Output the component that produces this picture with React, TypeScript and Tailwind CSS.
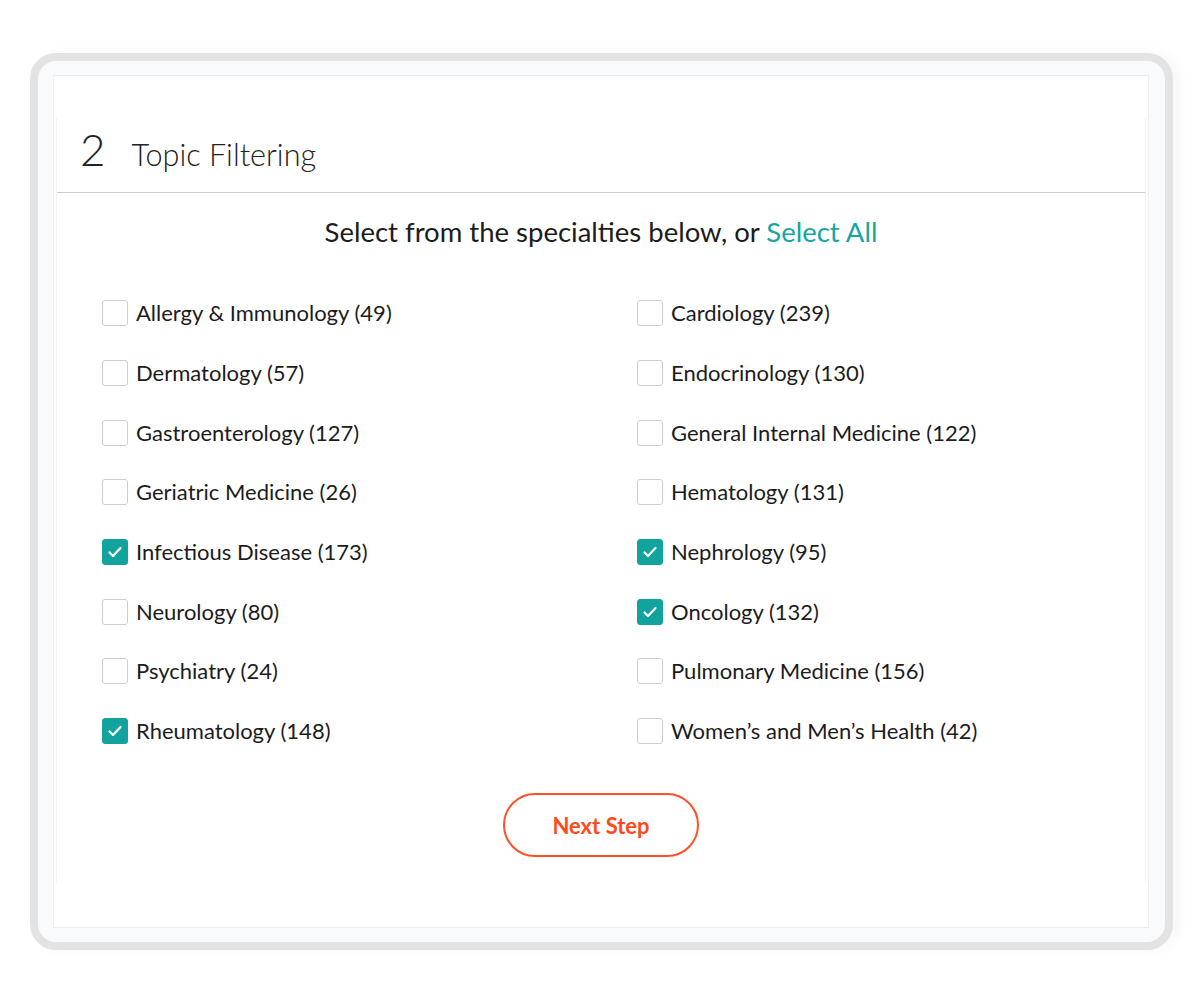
import { useState } from "react"

type Topic = { name: string; count: number }

const left: Topic[] = [
  { name: "Allergy & Immunology", count: 49 },
  { name: "Dermatology", count: 57 },
  { name: "Gastroenterology", count: 127 },
  { name: "Geriatric Medicine", count: 26 },
  { name: "Infectious Disease", count: 173 },
  { name: "Neurology", count: 80 },
  { name: "Psychiatry", count: 24 },
  { name: "Rheumatology", count: 148 },
]

const right: Topic[] = [
  { name: "Cardiology", count: 239 },
  { name: "Endocrinology", count: 130 },
  { name: "General Internal Medicine", count: 122 },
  { name: "Hematology", count: 131 },
  { name: "Nephrology", count: 95 },
  { name: "Oncology", count: 132 },
  { name: "Pulmonary Medicine", count: 156 },
  { name: "Women\u2019s and Men\u2019s Health", count: 42 },
]

// interleave so the grid fills row by row
const topics: Topic[] = left.flatMap((t, i) => [t, right[i]])

function Check({ on }: { on: boolean }) {
  return (
    <span
      className={[
        "flex h-[26px] w-[26px] shrink-0 items-center justify-center rounded-[3px] border",
        on ? "border-[#13a39e] bg-[#13a39e]" : "border-[#cfcfcf] bg-white",
      ].join(" ")}
    >
      {on && (
        <svg width="16" height="16" viewBox="0 0 16 16" fill="none">
          <path d="M2.5 8.5l3.5 3.5 7.5-8" stroke="white" strokeWidth="2.2" strokeLinecap="round" strokeLinejoin="round" />
        </svg>
      )}
    </span>
  )
}

export default function App() {
  const [selected, setSelected] = useState<Set<string>>(
    new Set(["Infectious Disease", "Nephrology", "Oncology", "Rheumatology"])
  )

  const toggle = (name: string) => {
    const next = new Set(selected)
    if (next.has(name)) next.delete(name)
    else next.add(name)
    setSelected(next)
  }

  return (
    <div className="h-[1006px] w-[1200px] bg-white pt-[53px] pl-[30px] font-[Lato,sans-serif] text-[#1c1c1c]">
      {/* device frame */}
      <div className="h-[897px] w-[1143px] rounded-[26px] border-[8px] border-[#e3e3e3] bg-[#f9fafb] pt-[14px] pb-[14px] pl-[15px] pr-[16px] shadow-[6px_0_14px_rgba(0,0,0,0.035)]">
        <div className="h-full border border-[#eceef2] bg-white pt-[42px]">
          <div className="mx-[2px] border-x border-[#f3f3f3] bg-white">
            {/* header */}
            <div className="flex items-baseline border-b border-[#cbcbcb] px-[23px] pt-[9px] pb-[21px] font-light leading-none">
              <span className="text-[44px] text-[#222]">2</span>
              <span className="ml-[26px] text-[30.6px] text-[#222]">Topic Filtering</span>
            </div>

            <p className="mt-[25px] text-center text-[27.5px] leading-none text-[#1c1c1c]">
              Select from the specialties below, or{" "}
              <button
                className="text-[#17a6a1]"
                onClick={() => setSelected(new Set(topics.map((t) => t.name)))}
              >
                Select All
              </button>
            </p>

            <div className="mt-[38px] grid grid-cols-[535px_1fr] px-[45px]">
              {topics.map((t) => (
                <label
                  key={t.name}
                  className="flex h-[59.7px] cursor-pointer items-center gap-[8px]"
                  onClick={() => toggle(t.name)}
                >
                  <Check on={selected.has(t.name)} />
                  <span className="text-[22px] leading-none text-[#1c1c1c]">
                    {t.name} ({t.count})
                  </span>
                </label>
              ))}
            </div>

            <div className="flex justify-center pt-[32px] pb-[26px]">
              <button className="h-[64px] w-[196px] rounded-full border-2 border-[#ff5026] text-[22px] font-bold text-[#ff4b1c]">
                Next Step
              </button>
            </div>
          </div>
        </div>
      </div>
    </div>
  )
}
